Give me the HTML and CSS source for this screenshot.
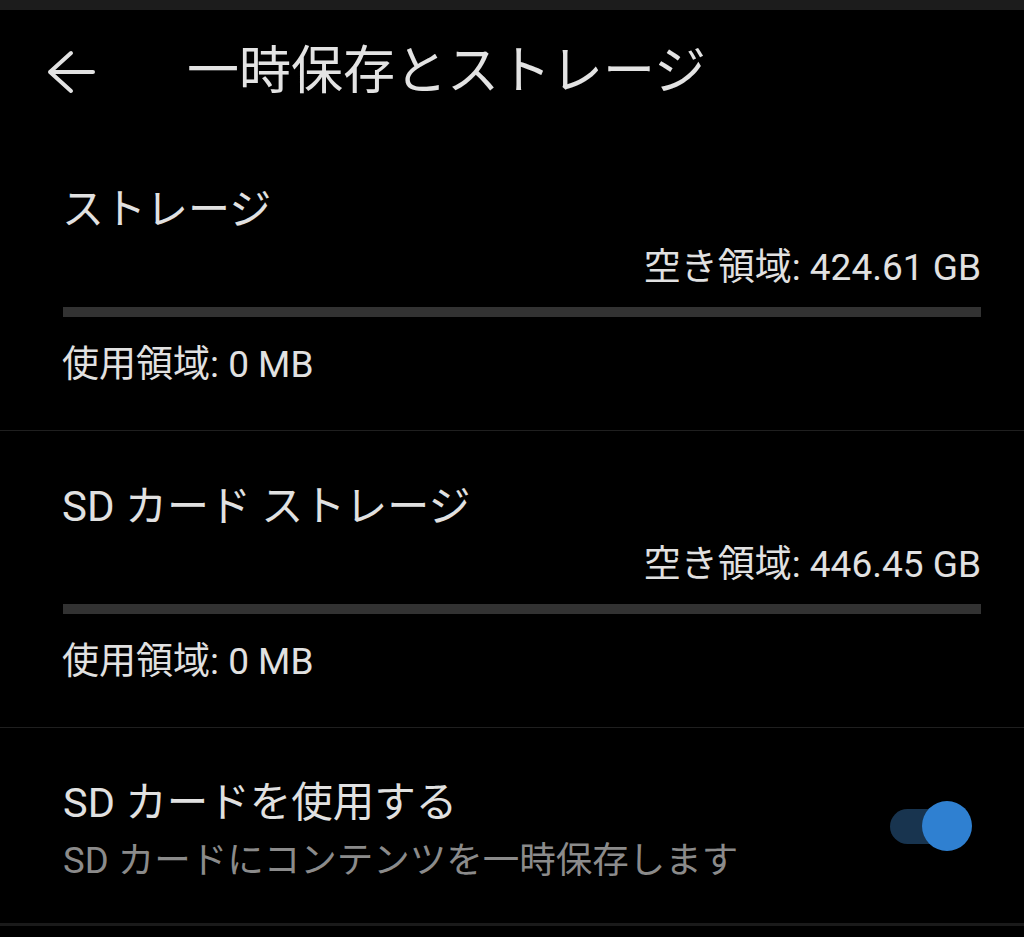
FILE: index.html
```html
<!DOCTYPE html>
<html lang="ja">
<head>
<meta charset="utf-8">
<title>一時保存とストレージ</title>
<link rel="stylesheet" href="styles.css">
</head>
<body>
<div class="status-strip"></div>
<header class="app-bar">
  <svg class="back" viewBox="0 0 48 48" width="48" height="48" aria-hidden="true">
    <path d="M46 24H3M24 5L3 24L24 43" fill="none" stroke="#e2e2e2" stroke-width="4" stroke-linecap="round" stroke-linejoin="round"/>
  </svg>
  <h1 class="title">一時保存とストレージ</h1>
</header>

<section class="storage">
  <div class="storage-title">ストレージ</div>
  <div class="storage-free">空き領域: 424.61 GB</div>
  <div class="storage-bar"></div>
  <div class="storage-used">使用領域: 0 MB</div>
</section>

<section class="storage">
  <div class="storage-title">SD カード ストレージ</div>
  <div class="storage-free">空き領域: 446.45 GB</div>
  <div class="storage-bar"></div>
  <div class="storage-used">使用領域: 0 MB</div>
</section>

<section class="setting">
  <div class="setting-text">
    <div class="setting-title">SD カードを使用する</div>
    <div class="setting-sub">SD カードにコンテンツを一時保存します</div>
  </div>
  <div class="switch">
    <span class="switch-track"></span>
    <span class="switch-knob"></span>
  </div>
</section>
</body>
</html>
```

FILE: styles.css
```css
html, body {
  margin: 0;
  padding: 0;
  background: #000;
}

body {
  width: 1024px;
  height: 937px;
  overflow: hidden;
  font-family: Roboto, "Noto Sans CJK JP", sans-serif;
  color: #e1e1e1;
}

.status-strip {
  height: 10px;
  background: #1c1c1c;
}

.app-bar {
  height: 124px;
  display: flex;
  align-items: center;
  padding-left: 47px;
}

.back {
  display: block;
  flex: none;
}

.title {
  margin: 0 0 0 92px;
  font-size: 52px;
  font-weight: 400;
  line-height: 60px;
  color: #e3e3e3;
}

.storage {
  height: 297px;
  box-sizing: border-box;
  padding: 50px 43px 0 62px;
  border-bottom: 1px solid #1f1f1f;
}

.storage-title {
  font-size: 42px;
  line-height: 52px;
}

.storage-free {
  margin-top: 9px;
  font-size: 37px;
  line-height: 46px;
  text-align: right;
}

.storage-bar {
  margin-top: 16px;
  margin-left: 1px;
  height: 10px;
  background: #323232;
}

.storage-used {
  margin-top: 25px;
  font-size: 37px;
  line-height: 46px;
}

.setting {
  height: 198px;
  box-sizing: border-box;
  display: flex;
  align-items: center;
  padding: 0 52px 0 63px;
  border-bottom: 3px solid #1a1a1a;
}

.setting-text {
  flex: 1;
  padding: 50px 0 41px;
}

.setting-title {
  font-size: 41.5px;
  line-height: 52px;
}

.setting-sub {
  margin-top: 9px;
  font-size: 36.5px;
  line-height: 46px;
  color: #8b8b8b;
}

.switch {
  position: relative;
  width: 82px;
  height: 50px;
  flex: none;
}

.switch-track {
  position: absolute;
  left: 0;
  top: 8px;
  width: 74px;
  height: 35px;
  border-radius: 18px;
  background: #18344f;
}

.switch-knob {
  position: absolute;
  right: 0;
  top: 0;
  width: 50px;
  height: 50px;
  border-radius: 50%;
  background: #2f80d1;
}
```
